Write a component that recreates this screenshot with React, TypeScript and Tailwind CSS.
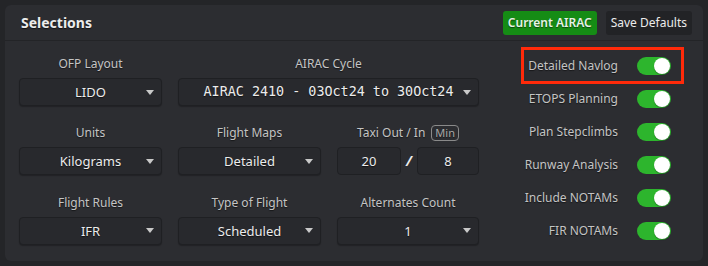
import React from "react";

const font = { fontFamily: '"Noto Sans", "Open Sans", sans-serif' };

function Caret() {
  return (
    <svg width="8" height="5" viewBox="0 0 8 5" className="shrink-0">
      <path d="M0 0 L8 0 L4 5 Z" fill="#c9c9c9" />
    </svg>
  );
}

function Select({ value, mono = false }: { value: string; mono?: boolean }) {
  return (
    <div className="flex h-[28px] items-center rounded-[4px] border border-[#1f2023] bg-[#28292d] pl-[15px] pr-[7px] shadow-[0_1px_1px_rgba(0,0,0,0.25)]">
      <span
        className={
          mono
            ? "flex-1 whitespace-nowrap text-center font-['DejaVu_Sans_Mono',monospace] text-[13.4px] leading-[18px] text-[#ececec] [text-shadow:0_1px_1px_rgba(0,0,0,0.6)]"
            : "flex-1 whitespace-nowrap text-center text-[13px] leading-[18px] text-[#ececec] [text-shadow:0_1px_1px_rgba(0,0,0,0.6)]"
        }
      >
        {value}
      </span>
      <Caret />
    </div>
  );
}

function Field({ label, children }: { label: React.ReactNode; children: React.ReactNode }) {
  return (
    <div className="flex flex-col gap-[5px]">
      <div className="flex h-[18px] items-center justify-center whitespace-nowrap text-[12px] leading-[16px] text-[#c4c4c4] [text-shadow:0_1px_1px_rgba(0,0,0,0.5)]">
        {label}
      </div>
      {children}
    </div>
  );
}

function Toggle({ label, boxed = false }: { label: string; boxed?: boolean }) {
  return (
    <div
      className={
        boxed
          ? "-mb-[2px] -mr-[13px] flex h-[37px] items-center justify-end gap-[19px] border-[3px] border-[#ff2a0a] pr-[10px]"
          : "flex h-[33px] items-center justify-end gap-[19px]"
      }
    >
      <span className="whitespace-nowrap text-[12px] text-[#c4c4c4] [text-shadow:0_1px_1px_rgba(0,0,0,0.5)]">
        {label}
      </span>
      <div className="flex h-[18px] w-[34px] shrink-0 items-center justify-end rounded-full bg-[#2db52d] pr-[1px]">
        <div className="h-[16px] w-[16px] rounded-full bg-white shadow-[0_1px_1px_rgba(0,0,0,0.3)]" />
      </div>
    </div>
  );
}

export default function App() {
  return (
    <div className="h-[266px] w-[708px] bg-[#242528] p-[5px]" style={font}>
      <div className="flex h-[256px] flex-col rounded-[6px] bg-[#2c2d31]">
        <div className="flex h-[36px] items-center justify-between border-b border-[#232427] pl-[16px] pr-[11px]">
          <h1 className="text-[14px] font-bold text-[#ececec] [text-shadow:0_1px_1px_rgba(0,0,0,0.6)]">Selections</h1>
          <div className="flex gap-[9px]">
            <button className="h-[24px] rounded-[3px] bg-[#158c15] px-[5px] text-[12px] font-semibold text-[#e6f3e6] [text-shadow:0_1px_1px_rgba(0,0,0,0.5)]">
              Current AIRAC
            </button>
            <button className="h-[24px] rounded-[3px] bg-[#222326] px-[5px] text-[12px] text-[#ececec]">
              Save Defaults
            </button>
          </div>
        </div>

        <div className="flex pt-[14px]">
          <div className="grid w-[475px] shrink-0 grid-cols-[143px_143px_142px] gap-x-[16px] gap-y-[16px] pl-[14px]">
            <Field label="OFP Layout">
              <Select value="LIDO" />
            </Field>
            <div className="col-span-2">
              <Field label="AIRAC Cycle">
                <Select value="AIRAC 2410 - 03Oct24 to 30Oct24" mono />
              </Field>
            </div>

            <Field label="Units">
              <Select value="Kilograms" />
            </Field>
            <Field label="Flight Maps">
              <Select value="Detailed" />
            </Field>
            <Field
              label={
                <span className="flex items-center gap-[6px]">
                  Taxi Out / In
                  <span className="rounded-[4px] border border-[#8a8a8a] px-[3px] text-[11px] leading-[14px] text-[#a8a8a8]">
                    Min
                  </span>
                </span>
              }
            >
              <div className="flex items-center gap-[5px]">
                <div className="flex h-[28px] w-[64px] items-center justify-center rounded-[4px] border border-[#1f2023] bg-[#28292d] text-[13px] text-[#ececec] [text-shadow:0_1px_1px_rgba(0,0,0,0.6)]">
                  20
                </div>
                <span className="text-[14px] font-bold italic leading-[18px] text-[#ececec]">/</span>
                <div className="flex h-[28px] flex-1 items-center justify-center rounded-[4px] border border-[#1f2023] bg-[#28292d] text-[13px] text-[#ececec] [text-shadow:0_1px_1px_rgba(0,0,0,0.6)]">
                  8
                </div>
              </div>
            </Field>

            <Field label="Flight Rules">
              <Select value="IFR" />
            </Field>
            <Field label="Type of Flight">
              <Select value="Scheduled" />
            </Field>
            <Field label="Alternates Count">
              <Select value="1" />
            </Field>
          </div>

          <div className="-mt-[8px] flex flex-1 flex-col pl-[41px] pr-[32px]">
            <Toggle label="Detailed Navlog" boxed />
            <Toggle label="ETOPS Planning" />
            <Toggle label="Plan Stepclimbs" />
            <Toggle label="Runway Analysis" />
            <Toggle label="Include NOTAMs" />
            <Toggle label="FIR NOTAMs" />
          </div>
        </div>
      </div>
    </div>
  );
}
